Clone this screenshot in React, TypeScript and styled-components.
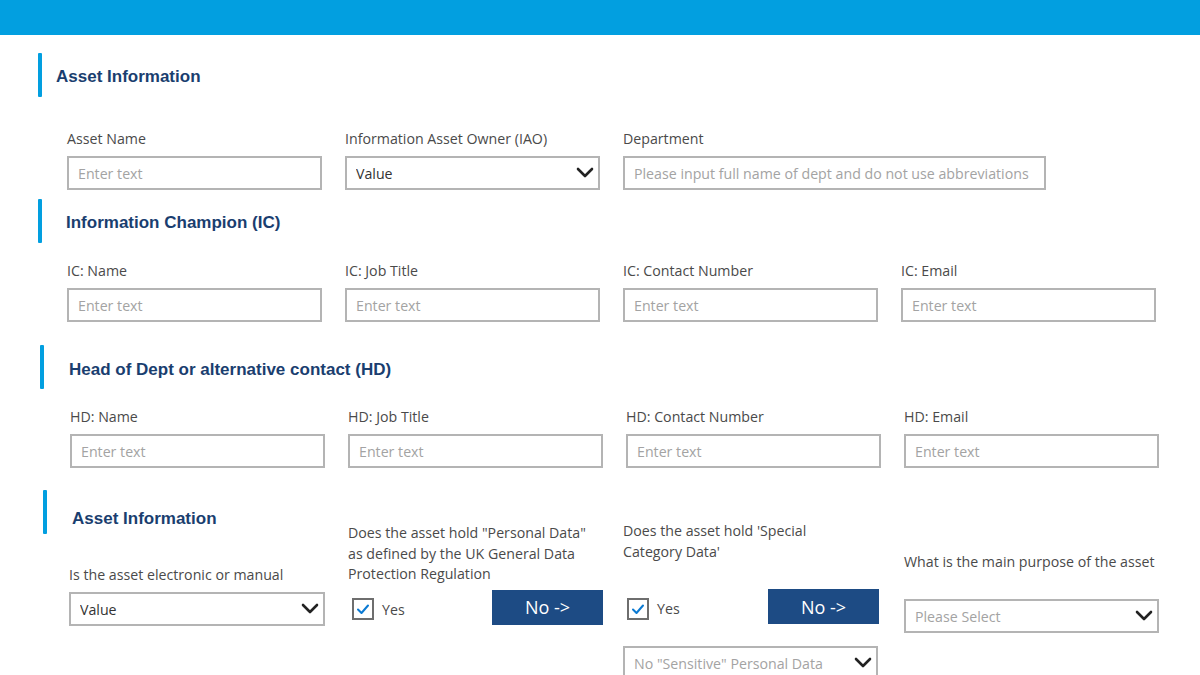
import styled, { createGlobalStyle } from "styled-components";

const COLORS = {
  blue: "#029fe0",
  navy: "#1a3e6f",
  button: "#1d4b84",
  label: "#4a4a4a",
  value: "#333333",
  placeholder: "#a3a3a3",
  border: "#b4b4b4",
  check: "#0b7ad3",
};

const GlobalStyle = createGlobalStyle`
  body {
    margin: 0;
    background: #ffffff;
    font-family: "Open Sans", "Noto Sans", sans-serif;
    overflow: hidden;
  }
`;

const Chevron = () => (
  <svg width="18" height="12" viewBox="0 0 18 12">
    <polyline
      points="2,2 9,9 16,2"
      fill="none"
      stroke="#222"
      strokeWidth="2.6"
      strokeLinecap="round"
      strokeLinejoin="round"
    />
  </svg>
);

const Check = () => (
  <svg width="14" height="12" viewBox="0 0 14 12">
    <polyline
      points="2,6.5 5.5,10 12,2.5"
      fill="none"
      stroke={COLORS.check}
      strokeWidth="2"
      strokeLinecap="round"
      strokeLinejoin="round"
    />
  </svg>
);

type FieldProps = {
  label: string;
  value?: string;
  placeholder?: string;
  select?: boolean;
};

const Field = ({ label, value, placeholder, select }: FieldProps) => (
  <FieldWrap>
    <Label>{label}</Label>
    <Box>
      <BoxText $muted={!value}>{value || placeholder}</BoxText>
      {select && <Chevron />}
    </Box>
  </FieldWrap>
);

// drop = how far the title sits below the bar's centre line
type HeaderProps = { title: string; indent: number; drop?: number };

const SectionHeader = ({ title, indent, drop = 2 }: HeaderProps) => (
  <HeaderRow>
    <AccentBar />
    <Title $indent={indent} $drop={drop}>
      {title}
    </Title>
  </HeaderRow>
);

export default function App() {
  return (
    <>
      <GlobalStyle />
      <TopBar />
      <Page>
        <Section $x={38} $top={18}>
          <SectionHeader title="Asset Information" indent={14} />
          <FieldGrid $top={32} $x={29}>
            <Field label="Asset Name" placeholder="Enter text" />
            <Field label="Information Asset Owner (IAO)" value="Value" select />
            <WideField>
              <Field
                label="Department"
                placeholder="Please input full name of dept and do not use abbreviations"
              />
            </WideField>
          </FieldGrid>
        </Section>

        <Section $x={38} $top={9}>
          <SectionHeader title="Information Champion (IC)" indent={24} />
          <FieldGrid $top={18} $x={29}>
            <Field label="IC: Name" placeholder="Enter text" />
            <Field label="IC: Job Title" placeholder="Enter text" />
            <Field label="IC: Contact Number" placeholder="Enter text" />
            <Field label="IC: Email" placeholder="Enter text" />
          </FieldGrid>
        </Section>

        <Section $x={40} $top={23}>
          <SectionHeader title="Head of Dept or alternative contact (HD)" indent={25} drop={3} />
          <FieldGrid $top={18} $x={30}>
            <Field label="HD: Name" placeholder="Enter text" />
            <Field label="HD: Job Title" placeholder="Enter text" />
            <Field label="HD: Contact Number" placeholder="Enter text" />
            <Field label="HD: Email" placeholder="Enter text" />
          </FieldGrid>
        </Section>

        <Section $x={43} $top={22}>
          <QuestionRow>
            <Column $width={282} $top={0} $gap={0}>
              <SectionHeader title="Asset Information" indent={25} drop={7} />
              <Indented>
                <Field label="Is the asset electronic or manual" value="Value" select />
              </Indented>
            </Column>

            <Column $width={255} $top={33} $gap={23}>
              <MultiLabel>
                Does the asset hold "Personal Data"
                <br />
                as defined by the UK General Data
                <br />
                Protection Regulation
              </MultiLabel>
              <ChoiceRow $top={5}>
                <CheckLabel>
                  <CheckBox>
                    <Check />
                  </CheckBox>
                  Yes
                </CheckLabel>
                <NoButton>No -&gt;</NoButton>
              </ChoiceRow>
            </Column>

            <Column $width={256} $top={31} $gap={20}>
              <MultiLabel>
                Does the asset hold 'Special
                <br />
                Category Data'
              </MultiLabel>
              <ChoiceRow $top={27}>
                <CheckLabel>
                  <CheckBox>
                    <Check />
                  </CheckBox>
                  Yes
                </CheckLabel>
                <NoButton>No -&gt;</NoButton>
              </ChoiceRow>
              <SubSelect>
                <Box>
                  <BoxText $muted>No "Sensitive" Personal Data</BoxText>
                  <Chevron />
                </Box>
              </SubSelect>
            </Column>

            <Column $width={255} $top={62} $gap={25}>
              <Label>What is the main purpose of the asset</Label>
              <SpacedBox>
                <Box>
                  <BoxText $muted>Please Select</BoxText>
                  <Chevron />
                </Box>
              </SpacedBox>
            </Column>
          </QuestionRow>
        </Section>
      </Page>
    </>
  );
}

const TopBar = styled.header`
  height: 35px;
  background: ${COLORS.blue};
`;

const Page = styled.main`
  display: flex;
  flex-direction: column;
`;

const Section = styled.section<{ $x: number; $top: number }>`
  display: flex;
  flex-direction: column;
  padding-left: ${(p) => p.$x}px;
  margin-top: ${(p) => p.$top}px;
`;

const HeaderRow = styled.div`
  display: flex;
  align-items: center;
  height: 44px;
`;

const AccentBar = styled.div`
  width: 4px;
  height: 44px;
  border-radius: 1px;
  background: ${COLORS.blue};
`;

const Title = styled.h2<{ $indent: number; $drop: number }>`
  margin: ${(p) => p.$drop * 2}px 0 0 ${(p) => p.$indent}px;
  font-family: "Liberation Sans", Arial, sans-serif;
  font-size: 17px;
  font-weight: 700;
  color: ${COLORS.navy};
`;

const FieldGrid = styled.div<{ $top: number; $x: number }>`
  display: grid;
  grid-template-columns: repeat(4, 255px);
  column-gap: 23px;
  margin-top: ${(p) => p.$top}px;
  padding-left: ${(p) => p.$x}px;
`;

const WideField = styled.div`
  width: 423px;
`;

const FieldWrap = styled.div`
  display: flex;
  flex-direction: column;
`;

const Label = styled.label`
  display: block;
  font-size: 14.2px;
  line-height: 20px;
  color: ${COLORS.label};
  margin-bottom: 7px;
  white-space: nowrap;
`;

const MultiLabel = styled.div`
  font-size: 14.2px;
  line-height: 20.5px;
  color: ${COLORS.label};
  white-space: nowrap;
`;

const Box = styled.div`
  box-sizing: border-box;
  display: flex;
  align-items: center;
  justify-content: space-between;
  height: 34px;
  padding: 0 4px 0 9px;
  border: 2px solid ${COLORS.border};
  background: #fff;
`;

const BoxText = styled.span<{ $muted?: boolean }>`
  font-size: 14.2px;
  color: ${(p) => (p.$muted ? COLORS.placeholder : COLORS.value)};
  white-space: nowrap;
  overflow: hidden;
`;

const QuestionRow = styled.div`
  display: flex;
  align-items: flex-start;
`;

const Column = styled.div<{ $width: number; $top: number; $gap: number }>`
  display: flex;
  flex-direction: column;
  width: ${(p) => p.$width}px;
  margin-left: ${(p) => p.$gap}px;
  padding-top: ${(p) => p.$top}px;
`;

const Indented = styled.div`
  margin: 31px 0 0 26px;
`;

const ChoiceRow = styled.div<{ $top: number }>`
  display: flex;
  align-items: center;
  justify-content: space-between;
  margin-top: ${(p) => p.$top}px;
  height: 35px;
`;

const CheckLabel = styled.div`
  display: flex;
  align-items: center;
  gap: 8px;
  padding: 4px 0 0 4px;
  font-size: 14.2px;
  color: ${COLORS.label};
`;

const CheckBox = styled.span`
  box-sizing: border-box;
  display: flex;
  align-items: center;
  justify-content: center;
  width: 22px;
  height: 22px;
  border: 2px solid #6e6e6e;
  background: #fff;
`;

const NoButton = styled.button`
  width: 111px;
  height: 35px;
  border: none;
  background: ${COLORS.button};
  color: #fff;
  font-family: "Open Sans", "Noto Sans", sans-serif;
  font-size: 18px;
  cursor: pointer;
`;

const SubSelect = styled.div`
  width: 255px;
  margin-top: 22px;
`;

const SpacedBox = styled.div`
  margin-top: 20px;
`;
